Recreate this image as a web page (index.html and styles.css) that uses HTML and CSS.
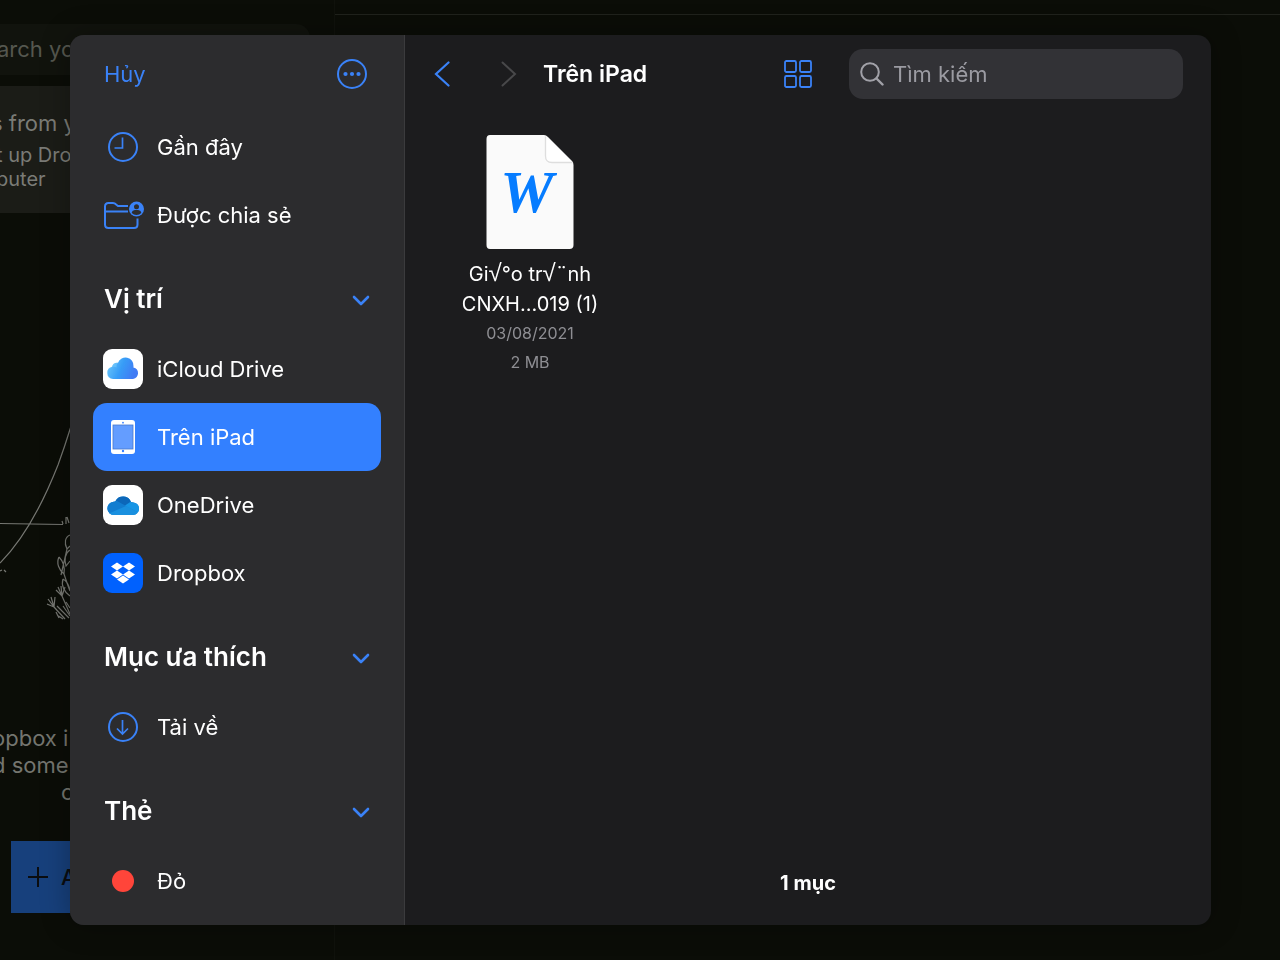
FILE: index.html
```html
<!DOCTYPE html>
<html lang="vi">
<head>
<meta charset="utf-8">
<title>Trên iPad</title>
<meta name="viewport" content="width=device-width, initial-scale=1">
<link rel="stylesheet" href="styles.css">
</head>
<body>
<div class="backdrop">
  <div class="back-side">
    <div class="back-search">arch yo</div>
    <div class="back-card">
      <div class="back-title">s from y</div>
      <div class="back-text">t up Dro</div>
      <div class="back-text">puter</div>
    </div>
    <svg class="back-art" viewBox="0 0 334 512" fill="none" stroke="#777873" stroke-width="1.200">
      <path d="M96 90C88 160 74 208 58 252C43 290 24 326 0 350M0 310.500L63 311.500"/>
      <path d="M0 358l2-1M4 357l2 2M63 311l-1-3M66 311l0-7M69 310l-2-6"/>
      <path d="M70 322c-5 2-6 8-3 14l3-3M67 336l-6 26M59 344c-3 6 0 13 5 17c1-7-1-13-5-17M70 337c-5 3-6 10-4 16l4-5M63 366c-2 6 1 13 7 17M63 366c4 2 6 7 7 11M64 361c2 6 4 12 6 17"/>
      <path d="M56 377l6 6-1-10M58 374l4 9M65 374l-3 9M62 383l8 18M48 386l6 8 1-10M51 384l3 10M47 391l7 3M54 394l11 12M57 393l12 12M57 402l6 4M63 393l7 10M66 389l4 6M56 399l3 6"/>
    </svg>
    <div class="back-note">opbox i</div>
    <div class="back-note">d some</div>
    <div class="back-note back-note-last">c</div>
    <button class="back-add" type="button">
      <svg width="22" height="22" viewBox="0 0 22 22" fill="none" stroke="currentColor" stroke-width="2"><path d="M11 1v20M1 11h20"/></svg>
      <span>A</span>
    </button>
  </div>
  <div class="back-main"><div class="back-rule"></div></div>
</div>

<div class="sheet" role="dialog" aria-label="Trên iPad">
  <aside class="sidebar">
    <div class="side-head">
      <button class="cancel" type="button">Hủy</button>
      <button class="icon-btn" type="button" aria-label="Thêm">
        <svg width="30" height="30" viewBox="0 0 30 30" fill="none" stroke="currentColor" stroke-width="2"><circle cx="15" cy="15" r="14"/><g fill="currentColor" stroke="none"><circle cx="8.500" cy="15" r="2.100"/><circle cx="15" cy="15" r="2.100"/><circle cx="21.500" cy="15" r="2.100"/></g></svg>
      </button>
    </div>
    <nav>
      <a class="row" href="#recents">
        <span class="row-icon"><svg width="30" height="30" viewBox="0 0 30 30" fill="none" stroke="currentColor" stroke-width="2"><circle cx="15" cy="15" r="14"/><path d="M14.500 5.500V16H6.500" stroke-width="1.700"/></svg></span>
        <span>Gần đây</span>
      </a>
      <a class="row" href="#shared">
        <span class="row-icon"><svg width="42" height="30" viewBox="0 0 42 30" fill="none" stroke="currentColor" stroke-width="2"><path d="M26 6H16L12.500 3.300Q12 3 11 3H6.500Q3 3 3 6.500V24.500Q3 28 6.500 28H32Q35.500 28 35.500 24.500V18.500M3 11.500H26"/><circle cx="34.500" cy="9" r="7.500" fill="currentColor" stroke="none"/><g fill="#2d2d2f" stroke="none"><circle cx="34.500" cy="6.800" r="2.500"/><path d="M29.700 13c.6-3 2.600-3 4.800-3s4.200 0 4.800 3q-2 2-4.800 2t-4.800-2z"/></g></svg></span>
        <span>Được chia sẻ</span>
      </a>
      <button class="section" type="button" aria-expanded="true"><span>Vị trí</span><svg width="18" height="18" viewBox="0 0 18 18"><path d="M2 7l7 7 7-7"/></svg></button>
      <a class="row" href="#icloud">
        <span class="row-icon app"><svg width="40" height="40" viewBox="0 0 40 40"><defs><linearGradient id="ic" x1="0" y1="0" x2="1" y2="0.300"><stop offset="0" stop-color="#72ccfa"/><stop offset=".55" stop-color="#379cf7"/><stop offset="1" stop-color="#407bf4"/></linearGradient></defs><path d="M10 30a6.200 6.200 0 0 1-1-12.200a5.500 5.500 0 0 1 6-4a8 8 0 0 1 15.500 3.400q0 .6-.1 1.200a5.900 5.900 0 0 1-.4 11.600z" fill="url(#ic)"/><path d="M15 13.800q-2 2-1.500 4.700a6 6 0 0 0-5.500 11.200q-4-1.200-4-5.700 0-4.500 5-6.200a5.500 5.500 0 0 1 6-4z" fill="#8bdcff" opacity=".35"/></svg></span>
        <span>iCloud Drive</span>
      </a>
      <a class="row selected" href="#ipad" aria-current="page">
        <span class="row-icon"><svg width="26" height="34" viewBox="0 0 26 34"><rect x="1" y="0" width="24" height="34" rx="3" fill="#fff"/><rect x="3" y="5" width="20" height="24" fill="#649dff" stroke="#4778ce" stroke-width=".8"/><circle cx="13" cy="2.700" r=".9" fill="#3880ff"/><circle cx="13" cy="31" r="1.200" fill="#3880ff"/></svg></span>
        <span>Trên iPad</span>
      </a>
      <a class="row" href="#onedrive">
        <span class="row-icon app"><svg width="40" height="40" viewBox="0 0 40 40"><defs><clipPath id="od"><path d="M11.500 30a6.600 6.600 0 0 1-1-13.200q1-.2 1.800-.2a8.500 8.500 0 0 1 15.800.6q.8 0 1.500.2a6.300 6.300 0 0 1 .4 12.600z"/></clipPath></defs><g clip-path="url(#od)"><path d="M4 8h32v24H4z" fill="#168bdc"/><path d="M11 8h22v9.500l-5.500.5L22 21l-11-5z" fill="#0c67b9"/><path d="M4 14l10 2 10 5.500L6 29H4z" fill="#127dd0"/><path d="M22 20.500l6-4h8v11z" fill="#1795e5"/><path d="M6 28.500l17-7.500 13 7.500v4H6z" fill="#1a90df"/></g></svg></span>
        <span>OneDrive</span>
      </a>
      <a class="row" href="#dropbox">
        <span class="row-icon app dropbox"><svg width="40" height="40" viewBox="0 0 40 40" fill="#fff"><path d="M14 9.500l6 4-6 4-6-4zM26 9.500l6 4-6 4-6-4zM14 17.500l6 4-6 4-6-4zM26 17.500l6 4-6 4-6-4zM20 22.500l6 4-6 4-6-4z"/></svg></span>
        <span>Dropbox</span>
      </a>
      <button class="section" type="button" aria-expanded="true"><span>Mục ưa thích</span><svg width="18" height="18" viewBox="0 0 18 18"><path d="M2 7l7 7 7-7"/></svg></button>
      <a class="row" href="#downloads">
        <span class="row-icon"><svg width="30" height="30" viewBox="0 0 30 30" fill="none" stroke="currentColor" stroke-width="2"><circle cx="15" cy="15" r="14"/><path d="M14.500 8v14M9 16.500l5.500 5.500 5.500-5.500" stroke-width="1.700"/></svg></span>
        <span>Tải về</span>
      </a>
      <button class="section" type="button" aria-expanded="true"><span>Thẻ</span><svg width="18" height="18" viewBox="0 0 18 18"><path d="M2 7l7 7 7-7"/></svg></button>
      <a class="row" href="#red">
        <span class="row-icon"><span class="dot"></span></span>
        <span>Đỏ</span>
      </a>
    </nav>
  </aside>

  <main class="main">
    <header class="toolbar">
      <button class="icon-btn" type="button" aria-label="Quay lại"><svg width="16" height="26" viewBox="0 0 16 26" fill="none" stroke="currentColor" stroke-width="2.200" stroke-linecap="round"><path d="M14.500 1.500L2 13l12.500 11.500"/></svg></button>
      <button class="icon-btn forward" type="button" aria-label="Tiếp" disabled><svg width="16" height="26" viewBox="0 0 16 26" fill="none" stroke="currentColor" stroke-width="2" stroke-linecap="round"><path d="M1.500 1.500L14 13 1.500 24.500"/></svg></button>
      <h1 class="title">Trên iPad</h1>
      <button class="icon-btn grid-btn" type="button" aria-label="Biểu tượng"><svg width="28" height="28" viewBox="0 0 28 28" fill="none" stroke="currentColor" stroke-width="1.800"><rect x="1" y="1" width="11" height="11" rx="1.500"/><rect x="16" y="1" width="11" height="11" rx="1.500"/><rect x="1" y="16" width="11" height="11" rx="1.500"/><rect x="16" y="16" width="11" height="11" rx="1.500"/></svg></button>
      <label class="search">
        <svg width="24" height="24" viewBox="0 0 24 24" fill="none" stroke="currentColor" stroke-width="2" stroke-linecap="round"><circle cx="10" cy="10" r="8.800"/><path d="M16.500 16.500l6 6" stroke-width="2.400"/></svg>
        <input type="search" placeholder="Tìm kiếm" aria-label="Tìm kiếm">
      </label>
    </header>
    <section class="files">
      <a class="file" href="#file">
        <svg width="88" height="114" viewBox="0 0 88 114"><path d="M4 0H58Q60 0 62 2L86 26Q87.500 27.500 87.500 30V110Q87.500 114 83.500 114H4Q.5 114 .5 110V4Q.5 0 4 0z" fill="#fafafa"/><path d="M59.500 1.500V21Q59.500 27.500 66 27.500H86.500" fill="#fff" stroke="#dedede" stroke-width="1.300"/><text class="file-glyph" x="41" y="77" text-anchor="middle">W</text></svg>
        <span class="file-name">Gi<span class="radical">√</span>°o tr<span class="radical">√</span>¨nh<br>CNXH...019 (1)</span>
        <span class="file-meta">03/08/2021</span>
        <span class="file-meta">2 MB</span>
      </a>
    </section>
    <footer class="count">1 mục</footer>
  </main>
</div>
</body>
</html>
```
FILE: styles.css
```css
* { box-sizing: border-box; }

body {
  margin: 0;
  min-height: 100vh;
  background: #0b0d07;
  color: #fff;
  font-family: Inter, "Noto Sans", sans-serif;
  font-size: 22px;
  overflow: hidden;
}

button {
  padding: 0;
  border: 0;
  background: none;
  color: inherit;
  font: inherit;
  text-align: left;
}

a { color: inherit; text-decoration: none; }
svg { display: block; flex: none; }

.backdrop { display: flex; height: 100vh; }

.back-side {
  flex: none;
  width: 334px;
  padding-top: 24px;
  overflow: hidden;
  color: #74756f;
}

.back-search {
  width: 310px;
  height: 51px;
  line-height: 51px;
  border-radius: 0 14px 14px 0;
  background: #11130d;
  color: #55574f;
  text-indent: -3px;
}

.back-card {
  height: 127px;
  margin-top: 11px;
  padding-top: 22px;
  background: #1b1c17;
  color: #7a7b76;
  white-space: nowrap;
}

.back-title { line-height: 30px; margin-left: -9px; }
.back-text { font-size: 20px; line-height: 24px; margin-left: -4px; }
.back-title + .back-text { margin-top: 5px; }
.back-art { width: 334px; height: 512px; }
.back-note { line-height: 27px; margin-left: -8px; }
.back-note-last { margin-left: 61px; }

.back-add {
  display: flex;
  align-items: center;
  gap: 12px;
  width: 300px;
  height: 72px;
  margin: 35px 0 0 11px;
  padding-left: 16px;
  background: #17407c;
  color: #0b0d10;
  font-weight: 500;
}

.back-main {
  flex: 1;
  padding-top: 14px;
  border-left: 1px solid #10120c;
}

.back-rule { height: 1px; background: #20221c; }

.sheet {
  position: fixed;
  inset: 35px 69px 35px 70px;
  display: flex;
  border-radius: 14px;
  background: #1c1c1e;
  box-shadow: 0 0 30px rgba(0, 0, 0, 0.3);
  overflow: hidden;
}

.sidebar {
  flex: none;
  width: 335px;
  border-right: 1px solid #3b3b3d;
  background: #2c2c2e;
  overflow: hidden;
}

.side-head {
  display: flex;
  align-items: center;
  justify-content: space-between;
  height: 78px;
  padding: 0 37px 0 34px;
  color: #3a82f7;
}

.icon-btn { color: #3a82f7; }

.row {
  display: flex;
  align-items: center;
  gap: 14px;
  height: 68px;
  margin: 0 23px;
  padding-left: 10px;
  border-radius: 14px;
}

.row.selected { background: #3380ff; }

.row-icon {
  display: flex;
  align-items: center;
  justify-content: center;
  width: 40px;
  height: 40px;
  color: #3a82f7;
}

.app { border-radius: 9px; background: #fff; overflow: hidden; }
.dropbox { background: #0061fe; }
.dot { width: 22px; height: 22px; border-radius: 50%; background: #ff453a; }

.section {
  display: flex;
  align-items: center;
  justify-content: space-between;
  width: 100%;
  height: 86px;
  padding: 13px 34px 0;
  font-size: 26px;
  font-weight: 600;
}

.section svg { fill: none; stroke: #3a82f7; stroke-width: 2.6; stroke-linecap: round; stroke-linejoin: round; }

.main {
  display: flex;
  flex: 1;
  flex-direction: column;
  min-width: 0;
}

.toolbar {
  display: flex;
  align-items: center;
  height: 78px;
  padding: 0 28px 0 29px;
}

.forward { margin: 0 26px 0 51px; color: #48484a; }
.title { margin: 0; font-size: 23px; font-weight: 600; white-space: nowrap; }
.grid-btn { margin: 0 37px 0 auto; }

.search {
  display: flex;
  align-items: center;
  gap: 9px;
  flex: 0 1 334px;
  min-width: 0;
  height: 50px;
  padding: 0 11px;
  border-radius: 14px;
  background: #323236;
  color: #a1a1a8;
}

.search input {
  flex: 1;
  width: 100%;
  min-width: 0;
  padding: 0;
  border: 0;
  outline: 0;
  background: none;
  color: #fff;
  font: inherit;
}

.search input::placeholder { color: #9b9ba2; opacity: 1; }

.files {
  display: grid;
  grid-template-columns: repeat(auto-fill, 192px);
  align-content: start;
  flex: 1;
  padding: 22px 29px;
}

.file {
  display: flex;
  flex-direction: column;
  align-items: center;
  text-align: center;
}

.file-glyph { fill: #067cff; font: italic bold 60px "Liberation Serif", serif; }
.file-name { margin-top: 10px; font-size: 20px; line-height: 30px; }
.radical { font-family: "DejaVu Sans Light", "DejaVu Sans", sans-serif; font-size: 24px; font-weight: 200; line-height: 1; }
.file-meta { color: #8e8e93; font-size: 16px; line-height: 29px; }

.count {
  padding-bottom: 28px;
  font-size: 20px;
  line-height: 28px;
  font-weight: 700;
  text-align: center;
}
```
